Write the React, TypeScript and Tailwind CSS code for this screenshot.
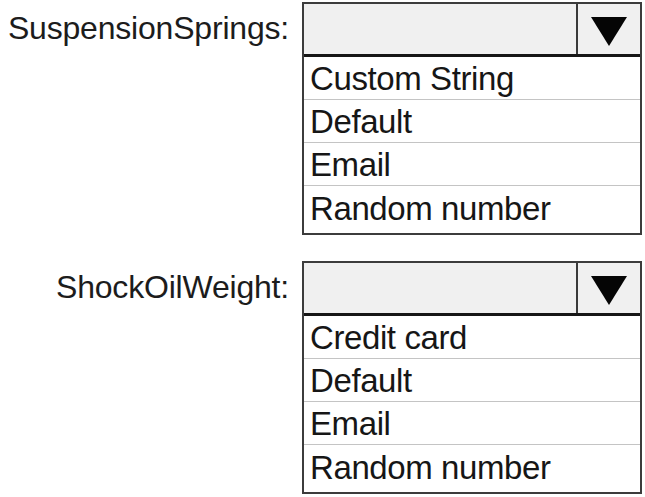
import React from 'react';

type Picker = {
  label: string;
  options: string[];
};

const pickers: Picker[] = [
  { label: 'SuspensionSprings:', options: ['Custom String', 'Default', 'Email', 'Random number'] },
  { label: 'ShockOilWeight:', options: ['Credit card', 'Default', 'Email', 'Random number'] },
];

const Arrow = () => (
  <svg width="36" height="29" viewBox="0 0 36 29">
    <polygon points="0,0 36,0 18,29" fill="#050505" />
  </svg>
);

const Dropdown: React.FC<Picker> = ({ label, options }) => (
  <div className="flex items-start">
    <div className="w-[302px] h-[52px] pr-[13px] flex items-center justify-end text-[32px] leading-none text-[#1c1c1c] tracking-[-0.2px]">
      {label}
    </div>
    <div className="w-[340px] border-2 border-[#3c3c3c] flex flex-col">
      <div className="h-[53px] flex bg-[#f0f0f0] border-b-[3px] border-[#161616]">
        <div className="flex-1" />
        <div className="w-[64px] border-l-2 border-[#3a3a3a] flex items-center justify-center pt-[4px]">
          <Arrow />
        </div>
      </div>
      <div className="h-[176px] flex flex-col bg-white">
        {options.map((opt, i) => (
          <div
            key={opt}
            className={
              i < options.length - 1
                ? 'h-[43px] border-b border-[#c4c4c4] pl-[6px] flex items-center text-[33px] leading-none text-[#161616] tracking-[-0.4px]'
                : 'flex-1 pl-[6px] pt-[6px] text-[33px] leading-none text-[#161616] tracking-[-0.4px]'
            }
          >
            {opt}
          </div>
        ))}
      </div>
    </div>
  </div>
);

export default function App() {
  return (
    <div
      className="w-[645px] h-[497px] bg-white pt-[2px] flex flex-col gap-[26px]"
      style={{ fontFamily: '"Liberation Sans", Arial, sans-serif' }}
    >
      {pickers.map((p) => (
        <Dropdown key={p.label} {...p} />
      ))}
    </div>
  );
}
